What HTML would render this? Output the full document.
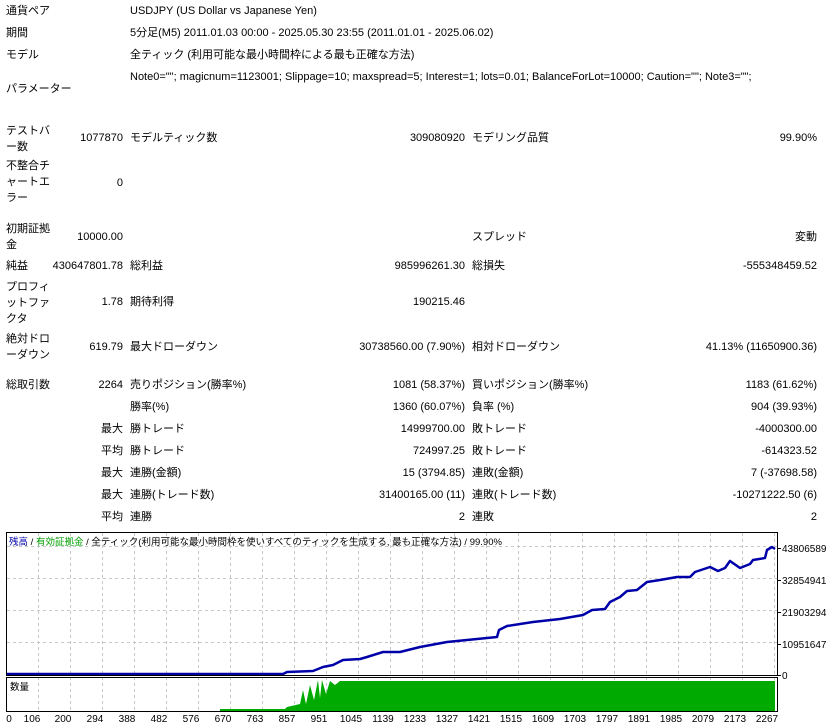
<!DOCTYPE html>
<html><head><meta charset="utf-8"><style>
body{margin:0;width:829px;height:725px;background:#fff;position:relative;overflow:hidden;font-family:"Liberation Sans","Noto Sans CJK JP",sans-serif;font-size:11px;color:#000}
.t{position:absolute;line-height:16px;white-space:nowrap}
.r{text-align:right}
</style></head><body>
<div class="t" style="left:6px;top:3px">通貨ペア</div>
<div class="t" style="left:130px;top:3px">USDJPY (US Dollar vs Japanese Yen)</div>
<div class="t" style="left:6px;top:25px">期間</div>
<div class="t" style="left:130px;top:25px">5分足(M5) 2011.01.03 00:00 - 2025.05.30 23:55 (2011.01.01 - 2025.06.02)</div>
<div class="t" style="left:6px;top:47px">モデル</div>
<div class="t" style="left:130px;top:47px">全ティック (利用可能な最小時間枠による最も正確な方法)</div>
<div class="t" style="left:130px;top:69px">Note0=""; magicnum=1123001; Slippage=10; maxspread=5; Interest=1; lots=0.01; BalanceForLot=10000; Caution=""; Note3="";</div>
<div class="t" style="left:6px;top:81px">パラメーター</div>

<div class="t" style="left:6px;top:123px">テストバ<br>ー数</div>
<div class="t r" style="right:706px;top:130px">1077870</div>
<div class="t" style="left:130px;top:130px">モデルティック数</div>
<div class="t r" style="right:364px;top:130px">309080920</div>
<div class="t" style="left:472px;top:130px">モデリング品質</div>
<div class="t r" style="right:12px;top:130px">99.90%</div>

<div class="t" style="left:6px;top:158px">不整合チ<br>ャートエ<br>ラー</div>
<div class="t r" style="right:706px;top:175px">0</div>

<div class="t" style="left:6px;top:221px">初期証拠<br>金</div>
<div class="t r" style="right:706px;top:229px">10000.00</div>
<div class="t" style="left:472px;top:229px">スプレッド</div>
<div class="t r" style="right:12px;top:229px">変動</div>

<div class="t" style="left:6px;top:258px">純益</div>
<div class="t r" style="right:706px;top:258px">430647801.78</div>
<div class="t" style="left:130px;top:258px">総利益</div>
<div class="t r" style="right:364px;top:258px">985996261.30</div>
<div class="t" style="left:472px;top:258px">総損失</div>
<div class="t r" style="right:12px;top:258px">-555348459.52</div>

<div class="t" style="left:6px;top:279px">プロフィ<br>ットファ<br>クタ</div>
<div class="t r" style="right:706px;top:294px">1.78</div>
<div class="t" style="left:130px;top:294px">期待利得</div>
<div class="t r" style="right:364px;top:294px">190215.46</div>

<div class="t" style="left:6px;top:331px">絶対ドロ<br>ーダウン</div>
<div class="t r" style="right:706px;top:339px">619.79</div>
<div class="t" style="left:130px;top:339px">最大ドローダウン</div>
<div class="t r" style="right:364px;top:339px">30738560.00 (7.90%)</div>
<div class="t" style="left:472px;top:339px">相対ドローダウン</div>
<div class="t r" style="right:12px;top:339px">41.13% (11650900.36)</div>

<div class="t" style="left:6px;top:377px">総取引数</div>
<div class="t r" style="right:706px;top:377px">2264</div>
<div class="t" style="left:130px;top:377px">売りポジション(勝率%)</div>
<div class="t r" style="right:364px;top:377px">1081 (58.37%)</div>
<div class="t" style="left:472px;top:377px">買いポジション(勝率%)</div>
<div class="t r" style="right:12px;top:377px">1183 (61.62%)</div>

<div class="t" style="left:130px;top:399px">勝率(%)</div>
<div class="t r" style="right:364px;top:399px">1360 (60.07%)</div>
<div class="t" style="left:472px;top:399px">負率 (%)</div>
<div class="t r" style="right:12px;top:399px">904 (39.93%)</div>

<div class="t r" style="right:706px;top:421px">最大</div>
<div class="t" style="left:130px;top:421px">勝トレード</div>
<div class="t r" style="right:364px;top:421px">14999700.00</div>
<div class="t" style="left:472px;top:421px">敗トレード</div>
<div class="t r" style="right:12px;top:421px">-4000300.00</div>

<div class="t r" style="right:706px;top:443px">平均</div>
<div class="t" style="left:130px;top:443px">勝トレード</div>
<div class="t r" style="right:364px;top:443px">724997.25</div>
<div class="t" style="left:472px;top:443px">敗トレード</div>
<div class="t r" style="right:12px;top:443px">-614323.52</div>

<div class="t r" style="right:706px;top:465px">最大</div>
<div class="t" style="left:130px;top:465px">連勝(金額)</div>
<div class="t r" style="right:364px;top:465px">15 (3794.85)</div>
<div class="t" style="left:472px;top:465px">連敗(金額)</div>
<div class="t r" style="right:12px;top:465px">7 (-37698.58)</div>

<div class="t r" style="right:706px;top:487px">最大</div>
<div class="t" style="left:130px;top:487px">連勝(トレード数)</div>
<div class="t r" style="right:364px;top:487px">31400165.00 (11)</div>
<div class="t" style="left:472px;top:487px">連敗(トレード数)</div>
<div class="t r" style="right:12px;top:487px">-10271222.50 (6)</div>

<div class="t r" style="right:706px;top:509px">平均</div>
<div class="t" style="left:130px;top:509px">連勝</div>
<div class="t r" style="right:364px;top:509px">2</div>
<div class="t" style="left:472px;top:509px">連敗</div>
<div class="t r" style="right:12px;top:509px">2</div>

<svg style="position:absolute;left:0;top:525px" width="829" height="200" viewBox="0 525 829 200" font-family="Liberation Sans, Noto Sans CJK JP, sans-serif" font-size="10">
<g stroke="#c8c8c8" stroke-dasharray="3,3" stroke-width="1">
<line x1="38.5" y1="533" x2="38.5" y2="711"/><line x1="70.5" y1="533" x2="70.5" y2="711"/><line x1="102.5" y1="533" x2="102.5" y2="711"/><line x1="134.5" y1="533" x2="134.5" y2="711"/><line x1="166.5" y1="533" x2="166.5" y2="711"/><line x1="198.5" y1="533" x2="198.5" y2="711"/><line x1="230.5" y1="533" x2="230.5" y2="711"/><line x1="262.5" y1="533" x2="262.5" y2="711"/><line x1="294.5" y1="533" x2="294.5" y2="711"/><line x1="326.5" y1="533" x2="326.5" y2="711"/><line x1="358.5" y1="533" x2="358.5" y2="711"/><line x1="390.5" y1="533" x2="390.5" y2="711"/><line x1="422.5" y1="533" x2="422.5" y2="711"/><line x1="454.5" y1="533" x2="454.5" y2="711"/><line x1="486.5" y1="533" x2="486.5" y2="711"/><line x1="518.5" y1="533" x2="518.5" y2="711"/><line x1="550.5" y1="533" x2="550.5" y2="711"/><line x1="582.5" y1="533" x2="582.5" y2="711"/><line x1="614.5" y1="533" x2="614.5" y2="711"/><line x1="646.5" y1="533" x2="646.5" y2="711"/><line x1="678.5" y1="533" x2="678.5" y2="711"/><line x1="710.5" y1="533" x2="710.5" y2="711"/><line x1="742.5" y1="533" x2="742.5" y2="711"/><line x1="774.5" y1="533" x2="774.5" y2="711"/>
<line x1="7" y1="546.5" x2="777" y2="546.5"/><line x1="7" y1="578.5" x2="777" y2="578.5"/><line x1="7" y1="610.5" x2="777" y2="610.5"/><line x1="7" y1="642.5" x2="777" y2="642.5"/>
</g>
<polygon fill="#00aa00" points="220,711 220,709 285,709 287,707 300,704 303,690 306,704 310,685 314,700 318,680 320,698 322,680 326,694 330,681 335,685 340,681 775,681 775,711"/>
<polyline fill="none" stroke="#0000a8" stroke-width="2.5" stroke-linejoin="round" points="7,674 283,674 287,672 313,671 323,667 333,665 343,660 360,659 367,657 383,652 400,652 420,647 447,642 497,637 499,630 507,626 533,622 560,619 583,615 592,610 605,609 610,602 620,597 627,591 637,590 647,582 660,580 677,577 690,577 695,572 710,567 718,571 725,568 730,561 740,568 750,564 753,560 765,558 767,550 772,547 775,549"/>
<rect x="6.5" y="532.5" width="771" height="143" fill="none" stroke="#000"/>
<rect x="6.5" y="677.5" width="771" height="34" fill="none" stroke="#000"/>
<g stroke="#000"><line x1="778" y1="548.5" x2="781" y2="548.5"/><line x1="778" y1="580.5" x2="781" y2="580.5"/><line x1="778" y1="612.5" x2="781" y2="612.5"/><line x1="778" y1="644.5" x2="781" y2="644.5"/><line x1="778" y1="675.5" x2="781" y2="675.5"/></g>
<g font-size="10">
<text x="782" y="552">43806589</text><text x="782" y="584">32854941</text><text x="782" y="616">21903294</text><text x="782" y="648">10951647</text><text x="782" y="679">0</text>
</g>
<text x="9" y="545" font-size="9.5"><tspan fill="#0000a8">残高</tspan> / <tspan fill="#00a000">有効証拠金</tspan> / 全ティック(利用可能な最小時間枠を使いすべてのティックを生成する, 最も正確な方法) / 99.90%</text>
<text x="10" y="690" font-size="9.5">数量</text>
<g font-size="10" text-anchor="middle">
<text x="9" y="722">0</text><text x="32" y="722">106</text><text x="63" y="722">200</text><text x="95" y="722">294</text><text x="127" y="722">388</text><text x="159" y="722">482</text><text x="191" y="722">576</text><text x="223" y="722">670</text><text x="255" y="722">763</text><text x="287" y="722">857</text><text x="319" y="722">951</text><text x="351" y="722">1045</text><text x="383" y="722">1139</text><text x="415" y="722">1233</text><text x="447" y="722">1327</text><text x="479" y="722">1421</text><text x="511" y="722">1515</text><text x="543" y="722">1609</text><text x="575" y="722">1703</text><text x="607" y="722">1797</text><text x="639" y="722">1891</text><text x="671" y="722">1985</text><text x="703" y="722">2079</text><text x="735" y="722">2173</text><text x="767" y="722">2267</text>
</g>
</svg>
</body></html>
